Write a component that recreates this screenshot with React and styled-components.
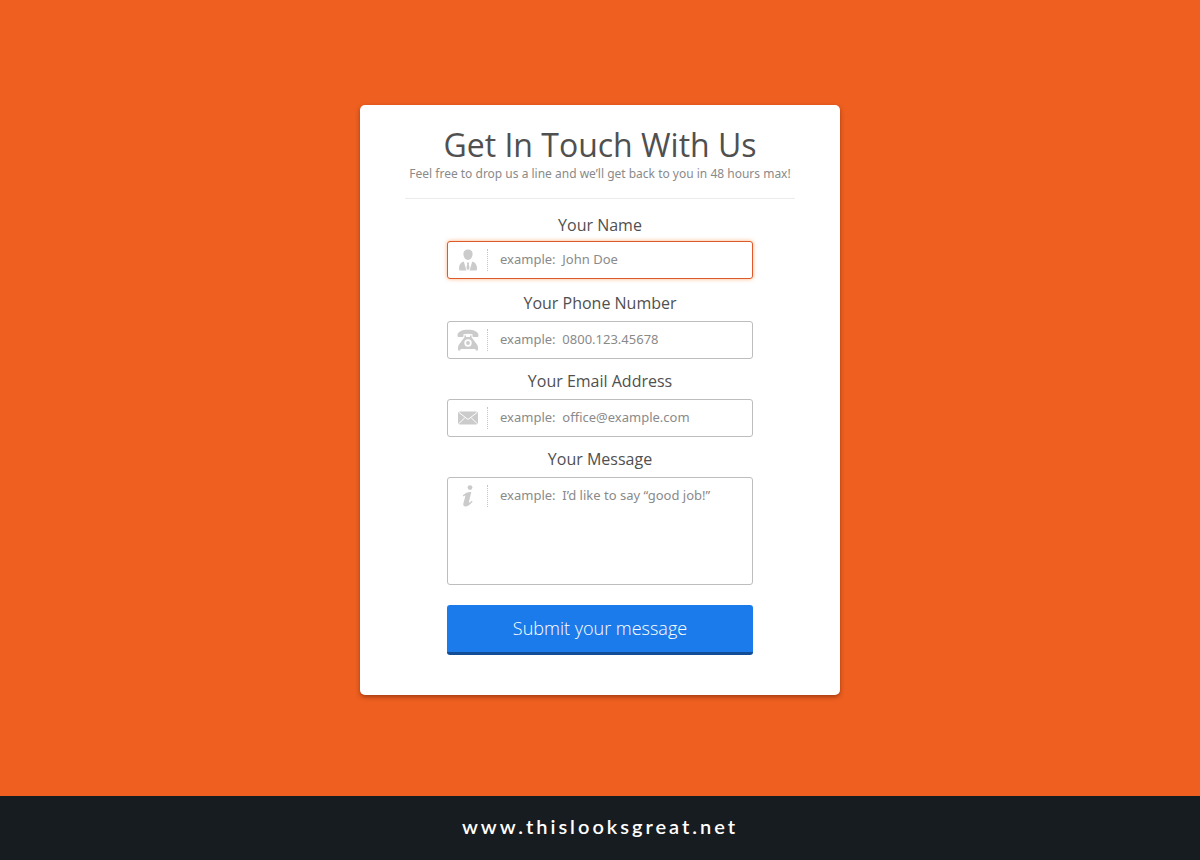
import React from 'react';
import styled, { createGlobalStyle, css } from 'styled-components';

const GlobalStyle = createGlobalStyle`
  *, *::before, *::after { box-sizing: border-box; }
  body {
    margin: 0;
    background: #ee5f20;
    font-family: "Open Sans", "Noto Sans", sans-serif;
    font-weight: 400;
    color: #505050;
  }
`;

const Page = styled.div`
  min-height: 100vh;
  display: flex;
  flex-direction: column;
`;

const Main = styled.main`
  flex: 1;
  display: flex;
  justify-content: center;
  align-items: flex-start;
  padding: 105px 16px 100px;
`;

const Card = styled.section`
  width: 100%;
  max-width: 480px;
  padding: 20px 45px 40px;
  background: #fff;
  border-radius: 5px;
  box-shadow: 0 2px 4px rgba(90, 25, 0, 0.5);
`;

const Header = styled.header`
  padding-bottom: 16px;
  border-bottom: 1px solid #ebebeb;
  text-align: center;
`;

const Title = styled.h1`
  margin: 0;
  font-size: 32px;
  font-weight: 400;
  line-height: 40px;
`;

const Subtitle = styled.p`
  margin: 0;
  font-family: "Noto Sans", sans-serif;
  font-size: 12px;
  line-height: 17px;
  color: #8a8a8a;
`;

const Form = styled.form`
  width: 100%;
  max-width: 306px;
  margin: 16px auto 0;
`;

const FieldGroup = styled.div`
  display: flex;
  flex-direction: column;
  gap: ${({ $active }) => ($active ? 6 : 8)}px;
  margin-bottom: ${({ $active }) => ($active ? 14 : 12)}px;
`;

const Label = styled.label`
  font-size: 16px;
  line-height: 20px;
  text-align: center;
`;

const Frame = styled.div`
  display: flex;
  align-items: flex-start;
  min-height: ${({ $tall }) => ($tall ? 108 : 38)}px;
  padding: 7px 0;
  background: #fff;
  border: 1px solid #bdbdbd;
  border-radius: 3px;
  ${({ $active }) =>
    $active &&
    css`
      border-color: #e0592a;
      box-shadow: 0 0 4px rgba(255, 130, 50, 0.6);
    `}
`;

const IconCell = styled.span`
  flex: none;
  display: flex;
  align-items: center;
  justify-content: center;
  width: 40px;
  height: 22px;
  border-right: 1px dotted #c4c4c4;
  color: #cbcbcb;
`;

const controlStyle = css`
  flex: 1;
  min-width: 0;
  margin: 0;
  padding: 0 12px;
  border: 0;
  outline: 0;
  background: transparent;
  color: #505050;
  font-family: "Noto Sans", sans-serif;
  font-size: 13px;
  line-height: 20px;

  &::placeholder {
    color: #8a8a8a;
    opacity: 1;
  }
`;

const Input = styled.input`
  ${controlStyle}
  height: 20px;
`;

const TextArea = styled.textarea`
  ${controlStyle}
  display: block;
  height: 92px;
  resize: none;
`;

const SubmitButton = styled.button`
  display: block;
  width: 100%;
  height: 50px;
  margin-top: 20px;
  padding: 0 0 2px;
  border: 0;
  border-bottom: 3px solid #134d96;
  border-radius: 3px;
  background: #1c7bea;
  color: #fff;
  font-family: inherit;
  font-size: 18px;
  font-weight: 300;
  cursor: pointer;
`;

const Footer = styled.footer`
  display: flex;
  align-items: center;
  justify-content: center;
  height: 64px;
  padding-bottom: 4px;
  background: #171c20;
`;

const SiteLink = styled.a`
  color: #fff;
  font-family: Lato, sans-serif;
  font-size: 20px;
  font-weight: 600;
  letter-spacing: 3px;
  line-height: 24px;
  text-decoration: none;
`;

const PersonIcon = () => (
  <svg width="18" height="22" viewBox="0 0 18 22" fill="currentColor" aria-hidden="true">
    <path d="M9 .5C6 .5 4.300 2.300 4.400 5C4.500 8 6.400 11 9 11S13.500 8 13.600 5C13.700 2.300 12 .5 9 .5Z" />
    <path d="M4.800 12.500L7.400 21.500H1.500C.6 21.500 0 21 0 20C0 16 1.300 13.500 4.800 12.500Z" />
    <path d="M13.200 12.500L10.600 21.500H16.500C17.400 21.500 18 21 18 20C18 16 16.700 13.500 13.200 12.500Z" />
    <path d="M7.800 13.500H10.200L9.800 15.300L10.600 19L9 21.500L7.400 19L8.200 15.300Z" />
  </svg>
);

const PhoneIcon = () => (
  <svg width="22" height="22" viewBox="0 0 22 22" fill="currentColor" aria-hidden="true">
    <path d="M.5 6.500C.5 2.600 5 .8 11 .8S21.500 2.600 21.500 6.500C21.500 7.600 21 8 20 8H16.800C15.800 8 15.500 7.500 15.500 6.500V5.300C13 4.500 9 4.500 6.500 5.300V6.500C6.500 7.500 6.200 8 5.200 8H2C1 8 .5 7.600 .5 6.500Z" />
    <path fillRule="evenodd" d="M7.500 6.500H9V8H13V6.500H14.500V8.300L20 15.500C20.700 16.400 21 17.300 21 18.500V20.500C21 22 18.500 22 18.500 20.500V20H3.500V20.500C3.500 22 1 22 1 20.500V18.500C1 17.300 1.300 16.400 2 15.500L7.500 8.300ZM11 10.300A3.700 3.700 0 1 0 11 17.700A3.700 3.700 0 1 0 11 10.300Z" />
    <circle cx="11" cy="14" r="1.900" />
  </svg>
);

const MailIcon = () => (
  <svg width="20" height="14" viewBox="0 0 20 14" fill="currentColor" aria-hidden="true">
    <rect y="0.500" width="20" height="13" rx="2" />
    <path d="M1 1.500L10 8.500L19 1.500M1 12.500L7 6.500M19 12.500L13 6.500" fill="none" stroke="#fff" strokeWidth="1" />
  </svg>
);

const InfoIcon = () => (
  <svg width="12" height="22" viewBox="0 0 12 22" fill="currentColor" aria-hidden="true">
    <circle cx="8" cy="2.600" r="2.400" />
    <path d="M.8 10.300C3.300 8 6 6.800 9.300 7L7 16.500C6.600 18 7.200 18.200 9.800 15.800L10.600 16.800C8 20 5.500 21.500 3.500 21.500C1.600 21.500 .9 20.200 1.400 18.300L3.300 11.200C3.600 10.200 3 10.400 1.600 11.400Z" />
  </svg>
);

const fields = [
  { id: 'name', label: 'Your Name', type: 'text', placeholder: 'example:  John Doe', Icon: PersonIcon, active: true },
  { id: 'phone', label: 'Your Phone Number', type: 'tel', placeholder: 'example:  0800.123.45678', Icon: PhoneIcon },
  { id: 'email', label: 'Your Email Address', type: 'email', placeholder: 'example:  office@example.com', Icon: MailIcon },
  { id: 'message', label: 'Your Message', multiline: true, placeholder: 'example:  I’d like to say “good job!”', Icon: InfoIcon },
];

function Field({ id, label, type, placeholder, Icon, active, multiline }) {
  return (
    <FieldGroup $active={active}>
      <Label htmlFor={id}>{label}</Label>
      <Frame $active={active} $tall={multiline}>
        <IconCell>
          <Icon />
        </IconCell>
        {multiline ? (
          <TextArea id={id} name={id} placeholder={placeholder} />
        ) : (
          <Input id={id} name={id} type={type} placeholder={placeholder} />
        )}
      </Frame>
    </FieldGroup>
  );
}

export default function App() {
  return (
    <Page>
      <GlobalStyle />
      <Main>
        <Card>
          <Header>
            <Title>Get In Touch With Us</Title>
            <Subtitle>Feel free to drop us a line and we’ll get back to you in 48 hours max!</Subtitle>
          </Header>
          <Form onSubmit={(event) => event.preventDefault()}>
            {fields.map((field) => (
              <Field key={field.id} {...field} />
            ))}
            <SubmitButton type="submit">Submit your message</SubmitButton>
          </Form>
        </Card>
      </Main>
      <Footer>
        <SiteLink href="http://www.thislooksgreat.net">www.thislooksgreat.net</SiteLink>
      </Footer>
    </Page>
  );
}
